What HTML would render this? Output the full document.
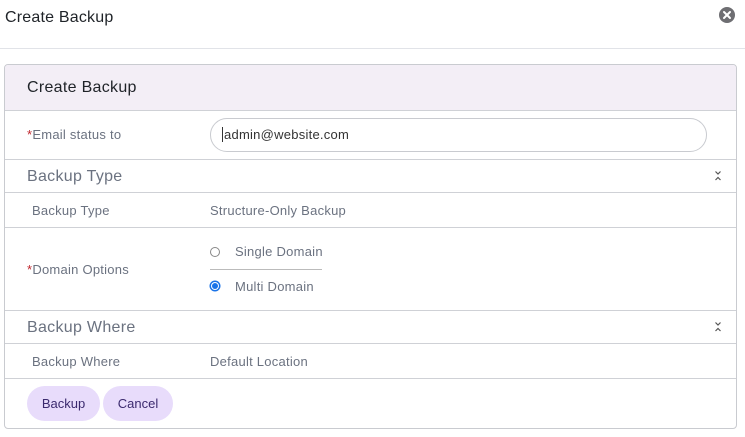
<!DOCTYPE html>
<html><head><style>
*{margin:0;padding:0;box-sizing:border-box}
body{width:745px;height:437px;background:#fff;font-family:"Liberation Sans",sans-serif;position:relative;overflow:hidden;color:#6b7280}
.a{position:absolute}
.hl{position:absolute;left:5px;width:731px;height:1px;background:#cfd1d6}
.t{font-size:13px;color:#6b7280;letter-spacing:0.25px}
.req{color:#c0262d}
</style></head><body>
<div class="a" style="left:5px;top:9px;font-size:16px;color:#1f2328;letter-spacing:0.2px">Create Backup</div>
<svg class="a" style="left:719px;top:7px" width="16" height="16" viewBox="0 0 16 16"><circle cx="8" cy="8" r="8" fill="#6e6e72"/><path d="M5 5L11 11M11 5L5 11" stroke="#fff" stroke-width="2" stroke-linecap="round"/></svg>
<div class="a" style="left:0;top:48px;width:745px;height:1px;background:#e1e3e8"></div>
<div class="a" style="left:4px;top:64px;width:733px;height:365px;border:1px solid #c9cbd0;border-radius:4px"></div>
<div class="a" style="left:5px;top:65px;width:731px;height:45px;background:#f3eef6;border-radius:3px 3px 0 0"></div>
<div class="a" style="left:27px;top:79px;font-size:16px;color:#1f2328;letter-spacing:0.3px">Create Backup</div>
<div class="hl" style="top:110px"></div>
<div class="a t" style="left:27px;top:127px"><span class="req">*</span>Email status to</div>
<div class="a" style="left:210px;top:118px;width:497px;height:34px;border:1px solid #c9cbd0;border-radius:17px"></div>
<div class="a" style="left:222px;top:127px;font-size:13px;color:#333;border-left:1px solid #333;padding-left:1px;letter-spacing:0.25px">admin@website.com</div>
<div class="hl" style="top:159px"></div>
<div class="a" style="left:27px;top:168px;font-size:16px;letter-spacing:0.3px">Backup Type</div>
<svg class="a" style="left:714px;top:170px" width="8" height="12" viewBox="0 0 8 12"><path d="M1.5 1.5L4 4L6.5 1.5M1.5 10L4 7.5L6.5 10" stroke="#555" stroke-width="1.2" fill="none"/></svg>
<div class="hl" style="top:192px"></div>
<div class="a t" style="left:32px;top:203px">Backup Type</div>
<div class="a t" style="left:210px;top:203px">Structure-Only Backup</div>
<div class="hl" style="top:227px"></div>
<div class="a t" style="left:27px;top:262px"><span class="req">*</span>Domain Options</div>
<div class="a" style="left:210px;top:247px;width:10px;height:10px;border:1px solid #888;border-radius:50%"></div>
<div class="a t" style="left:235px;top:244px">Single Domain</div>
<div class="a" style="left:210px;top:269px;width:112px;height:1px;background:#bbb"></div>
<svg class="a" style="left:209px;top:280px" width="12" height="12" viewBox="0 0 12 12"><circle cx="6" cy="6" r="5.5" fill="#1a73e8"/><circle cx="6" cy="6" r="4" fill="#fff"/><circle cx="6" cy="6" r="3" fill="#1a73e8"/></svg>
<div class="a t" style="left:235px;top:279px">Multi Domain</div>
<div class="hl" style="top:310px"></div>
<div class="a" style="left:27px;top:319px;font-size:16px;letter-spacing:0.3px">Backup Where</div>
<svg class="a" style="left:714px;top:321px" width="8" height="12" viewBox="0 0 8 12"><path d="M1.5 1.5L4 4L6.5 1.5M1.5 10L4 7.5L6.5 10" stroke="#555" stroke-width="1.2" fill="none"/></svg>
<div class="hl" style="top:343px"></div>
<div class="a t" style="left:32px;top:354px">Backup Where</div>
<div class="a t" style="left:210px;top:354px">Default Location</div>
<div class="hl" style="top:378px"></div>
<div class="a" style="left:27px;top:386px;width:73px;height:35px;border-radius:18px;background:#e8dcfb;color:#3b2a6e;font-size:13px;line-height:35px;text-align:center">Backup</div>
<div class="a" style="left:103px;top:386px;width:70px;height:35px;border-radius:18px;background:#e8dcfb;color:#3b2a6e;font-size:13px;line-height:35px;text-align:center">Cancel</div>
</body></html>
